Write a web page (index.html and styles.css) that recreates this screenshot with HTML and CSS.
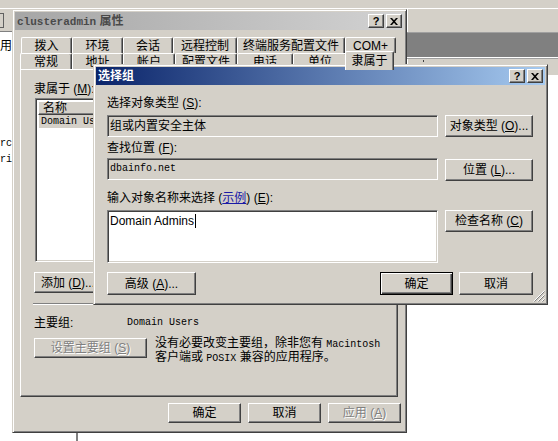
FILE: index.html
```html
<!DOCTYPE html>
<html>
<head>
    <title>clusteradmin 属性</title>
    <link rel="stylesheet" href="styles.css">
</head>
<body>
    <div class="strip-top"></div>

    <div class="bg-left">
        <div class="bg-left-top"><span class="bracket"></span></div>
        <div class="bg-left-line"></div>
        <div class="frag frag-a">用</div>
        <div class="frag frag-b mono">rc</div>
        <div class="frag frag-c mono">ri</div>
    </div>

    <div class="bg-right">
        <div class="bg-right-a"></div>
        <div class="bg-right-b"></div>
        <div class="bg-right-c"><span class="dot"></span></div>
    </div>

    <div class="stub"></div>

    <!-- properties window (behind) -->
    <div class="win props">
        <div class="caption idle">
            <span class="cap-text"><span class="mono-b">clusteradmin</span> 属性</span>
            <span class="cap-btns">
                <span class="cap-btn">?</span>
                <span class="cap-btn"><svg width="8" height="7" viewBox="0 0 8 7"><path d="M0 0h2l2 2.2L6 0h2L5 3.5 8 7H6L4 4.8 2 7H0l3-3.5z" fill="#000"/></svg></span>
            </span>
        </div>

        <div class="tabs">
            <div class="tabrow back">
                <span class="tab w51">拨入</span>
                <span class="tab w51">环境</span>
                <span class="tab w50">会话</span>
                <span class="tab w64">远程控制</span>
                <span class="tab w108">终端服务配置文件</span>
                <span class="tab w51">COM+</span>
            </div>
            <div class="tabrow front">
                <span class="tab w52">常规</span>
                <span class="tab w51">地址</span>
                <span class="tab w52">帐户</span>
                <span class="tab w62">配置文件</span>
                <span class="tab w56">电话</span>
                <span class="tab w54">单位</span>
                <span class="tab w49 active">隶属于</span>
            </div>
        </div>

        <div class="page">
            <div class="lbl">隶属于 (<u>M</u>):</div>
            <div class="list">
                <div class="list-head"><span class="head-cell">名称</span></div>
                <div class="list-item mono">Domain Users</div>
            </div>
            <div class="list-btns">
                <div class="btn w75">添加 (<u>D</u>)...</div>
            </div>
            <div class="etch"></div>
            <div class="prim">
                <span>主要组:</span>
                <span class="mono">Domain Users</span>
            </div>
            <div class="prim-row">
                <div class="btn off w113">设置主要组 (<u>S</u>)</div>
                <div class="note">没有必要改变主要组，除非您有 <span class="mono">Macintosh</span><br>客户端或 <span class="mono">POSIX</span> 兼容的应用程序。</div>
            </div>
        </div>

        <div class="foot">
            <div class="btn small">确定</div>
            <div class="btn small">取消</div>
            <div class="btn small off">应用 (<u>A</u>)</div>
        </div>
    </div>

    <!-- select group dialog (front) -->
    <div class="win pick">
        <div class="caption live">
            <span class="cap-text">选择组</span>
            <span class="cap-btns">
                <span class="cap-btn">?</span>
                <span class="cap-btn"><svg width="8" height="7" viewBox="0 0 8 7"><path d="M0 0h2l2 2.2L6 0h2L5 3.5 8 7H6L4 4.8 2 7H0l3-3.5z" fill="#000"/></svg></span>
            </span>
        </div>
        <div class="pick-body">
            <div class="lbl">选择对象类型 (<u>S</u>):</div>
            <div class="pick-row">
                <div class="field ro">组或内置安全主体</div>
                <div class="btn side">对象类型 (<u>O</u>)...</div>
            </div>
            <div class="lbl gap5">查找位置 (<u>F</u>):</div>
            <div class="pick-row tight">
                <div class="field ro mono">dbainfo.net</div>
                <div class="btn side drop1">位置 (<u>L</u>)...</div>
            </div>
            <div class="lbl gap11">输入对象名称来选择 (<span class="link">示例</span>) (<u>E</u>):</div>
            <div class="pick-row">
                <div class="field memo">Domain Admins<span class="caret"></span></div>
                <div class="btn side">检查名称 (<u>C</u>)</div>
            </div>
            <div class="pick-foot">
                <div class="btn w89">高级 (<u>A</u>)...</div>
                <span class="spacer"></span>
                <div class="btn default w73">确定</div>
                <div class="btn w74">取消</div>
            </div>
        </div>
        <svg class="grip" width="12" height="12" viewBox="0 0 12 12">
            <path d="M11.5 0.5L0.5 11.5M11.5 4.5L4.5 11.5M11.5 8.5L8.5 11.5" stroke="#fff"/>
            <path d="M11.5 1.5L1.5 11.5M11.5 5.5L5.5 11.5M11.5 9.5L9.5 11.5" stroke="#808080"/>
        </svg>
    </div>
</body>
</html>
```

FILE: styles.css
```css
body {
    margin: 0;
    width: 558px;
    height: 441px;
    overflow: hidden;
    position: relative;
    background: #fff;
    font-family: "Liberation Sans", "Noto Sans CJK SC", sans-serif;
    font-size: 12px;
    line-height: 12px;
    color: #000;
}

.mono {
    font-family: "Liberation Mono", "Noto Sans CJK SC", monospace;
    font-size: 10px;
}
.mono-b {
    font-family: "Liberation Mono", monospace;
    font-size: 11px;
    font-weight: bold;
}

/* desktop leftovers around the dialogs */
.strip-top {
    height: 8px;
    background: #d4d0c8;
    border-bottom: 1px solid #fff;
}

.bg-left {
    position: absolute;
    left: 0;
    top: 9px;
    width: 12px;
    height: 424px;
    overflow: hidden;
    display: flex;
    flex-direction: column;
}
.bg-left-top {
    height: 22px;
    background: #d4d0c8;
    display: flex;
    align-items: center;
}
.bracket {
    width: 4px;
    height: 13px;
    border: 1px solid #606060;
    border-left: none;
    margin-left: -1px;
}
.bg-left-line {
    height: 1px;
    border-top: 1px solid #808080;
    background: #fff;
}
.frag {
    white-space: nowrap;
}
.frag-a { margin-top: 7px; }
.frag-b { margin-top: 86px; }
.frag-c { margin-top: 4px; }

.bg-right {
    position: absolute;
    left: 406px;
    top: 9px;
    width: 152px;
    height: 66px;
    border-left: 1px solid #808080;
    box-shadow: inset 1px 0 #fff;
    background: #d4d0c8;
    display: flex;
    flex-direction: column;
}
.bg-right-a {
    height: 23px;
    border-bottom: 1px solid #a0a0a0;
}
.bg-right-b {
    height: 24px;
    background: #808080;
    border-bottom: 1px solid #fff;
}
.bg-right-c {
    flex: 1;
    border-top: 1px solid #a0a0a0;
}
.dot {
    display: block;
    width: 1px;
    height: 2px;
    background: #404040;
    margin: 1px 0 0 16px;
}

.stub {
    position: absolute;
    left: 76px;
    top: 433px;
    width: 2px;
    height: 8px;
    background: #808080;
}

/* classic windows */
.win {
    position: absolute;
    box-sizing: border-box;
    background: #d4d0c8;
    border: 1px solid;
    border-color: #d4d0c8 #404040 #404040 #d4d0c8;
    box-shadow: inset 1px 1px #fff, inset -1px -1px #808080;
    padding: 2px;
}
.props {
    left: 12px;
    top: 9px;
    width: 395px;
    height: 424px;
}
.pick {
    left: 93px;
    top: 64px;
    width: 455px;
    height: 241px;
}

.caption {
    height: 18px;
    display: flex;
    align-items: center;
    justify-content: space-between;
    padding: 0 2px;
    font-weight: bold;
}
.caption.idle {
    background: linear-gradient(to right, #a6a6a6, #d2d2d2);
    color: #4a4a4a;
}
.caption.live {
    background: linear-gradient(to right, #0a246a, #a6caf0);
    color: #fff;
}
.cap-text {
    white-space: nowrap;
}
.cap-btns {
    display: flex;
    gap: 2px;
}
.cap-btn {
    width: 16px;
    height: 14px;
    box-sizing: border-box;
    border: 1px solid;
    border-color: #fff #404040 #404040 #fff;
    box-shadow: inset -1px -1px #808080;
    background: #d4d0c8;
    color: #000;
    font-family: "Liberation Sans", sans-serif;
    font-size: 11px;
    font-weight: bold;
    display: flex;
    align-items: center;
    justify-content: center;
}

/* tabs */
.tabs {
    margin-top: 7px;
}
.tabrow {
    height: 16px;
    display: flex;
}
.tabrow.back { margin-left: 6px; }
.tabrow.front { margin-left: 5px; }
.tab {
    height: 16px;
    box-sizing: border-box;
    border: 1px solid;
    border-color: #fff #404040 transparent #fff;
    border-bottom: none;
    border-radius: 2px 2px 0 0;
    box-shadow: inset -1px 0 #808080;
    background: #d4d0c8;
    display: flex;
    align-items: center;
    justify-content: center;
    white-space: nowrap;
}
.tab.active {
    height: 19px;
    margin: -2px -2px 0 -2px;
    position: relative;
    z-index: 1;
}
.w49 { width: 49px; }
.w50 { width: 50px; }
.w51 { width: 51px; }
.w52 { width: 52px; }
.w54 { width: 54px; }
.w56 { width: 56px; }
.w62 { width: 62px; }
.w64 { width: 64px; }
.w108 { width: 108px; }
.w73 { width: 73px; }
.w74 { width: 74px; }
.w75 { width: 75px; }
.w89 { width: 89px; }
.w113 { width: 113px; }

/* tab page */
.page {
    margin-left: 5px;
    width: 378px;
    height: 328px;
    box-sizing: border-box;
    border: 1px solid;
    border-color: #fff #404040 #404040 #fff;
    box-shadow: inset -1px -1px #808080;
    padding: 13px 0 0 13px;
    display: flex;
    flex-direction: column;
    align-items: flex-start;
}
.lbl {
    height: 12px;
    white-space: nowrap;
}
.list {
    margin: 3px 0 0 1px;
    width: 348px;
    height: 164px;
    box-sizing: border-box;
    border: 1px solid;
    border-color: #808080 #fff #fff #808080;
    box-shadow: inset 1px 1px #404040, inset -1px -1px #d4d0c8;
    background: #fff;
    padding: 2px;
}
.list-head {
    height: 14px;
    display: flex;
}
.head-cell {
    width: 180px;
    box-sizing: border-box;
    border: 1px solid;
    border-color: #fff #404040 #404040 #fff;
    box-shadow: inset -1px -1px #808080;
    background: #d4d0c8;
    padding-left: 4px;
    display: flex;
    align-items: center;
}
.list-item {
    width: 178px;
    height: 13px;
    line-height: 13px;
    margin-left: 1px;
    padding-left: 2px;
    background: #d4d0c8;
}
.list-btns {
    margin-top: 10px;
    display: flex;
    gap: 7px;
}
.btn {
    height: 22px;
    box-sizing: border-box;
    border: 1px solid;
    border-color: #fff #404040 #404040 #fff;
    box-shadow: inset -1px -1px #808080;
    background: #d4d0c8;
    display: flex;
    align-items: center;
    justify-content: center;
    white-space: nowrap;
}
.list-btns .btn {
    height: 21px;
    justify-content: flex-start;
    padding-left: 6px;
}
.btn.default {
    border-color: #000;
    box-shadow: inset 1px 1px #fff, inset -1px -1px #404040, inset -2px -2px #808080;
}
.btn.off {
    color: #808080;
    text-shadow: 1px 1px #fff;
}
.btn.small {
    width: 73px;
    height: 20px;
}
.etch {
    margin: 10px 0 0 -1px;
    width: 353px;
    height: 1px;
    border-top: 1px solid #808080;
    background: #fff;
}
.prim {
    margin-top: 12px;
    display: grid;
    grid-template-columns: 93px auto;
    align-items: center;
}
.prim-row {
    margin-top: 9px;
    display: flex;
    align-items: flex-start;
    gap: 8px;
}
.prim-row .btn { height: 20px; }
.note {
    margin-top: -1px;
    white-space: nowrap;
}

.foot {
    margin-top: 6px;
    padding-right: 3px;
    display: flex;
    justify-content: flex-end;
    gap: 7px;
}

/* select group dialog body */
.pick-body {
    padding: 12px 12px 0 11px;
    display: flex;
    flex-direction: column;
}
.gap5 { margin-top: 5px; }
.gap11 { margin-top: 11px; }
.pick-row {
    margin-top: 6px;
    display: flex;
    align-items: flex-start;
    gap: 7px;
}
.pick-row.tight { margin-top: 4px; }
.side { width: 88px; }
.drop1 { margin-top: 1px; }
.field {
    width: 331px;
    height: 22px;
    box-sizing: border-box;
    border: 1px solid;
    border-color: #808080 #fff #fff #808080;
    box-shadow: inset 1px 1px #404040, inset -1px -1px #d4d0c8;
    padding: 4px 2px 0 2px;
    white-space: nowrap;
}
.field.ro { background: #d4d0c8; }
.field.memo {
    height: 53px;
    background: #fff;
    line-height: 14px;
    padding-top: 3px;
}
.caret {
    display: inline-block;
    width: 1px;
    height: 14px;
    background: #000;
    vertical-align: top;
    margin-left: 1px;
}
.link {
    color: #1a1aa6;
    text-decoration: underline;
}
.pick-foot {
    margin-top: 9px;
    display: flex;
    gap: 6px;
}
.pick-foot .btn { height: 23px; }
.spacer { flex: 1; }
.grip {
    position: absolute;
    right: 2px;
    bottom: 2px;
}
```
